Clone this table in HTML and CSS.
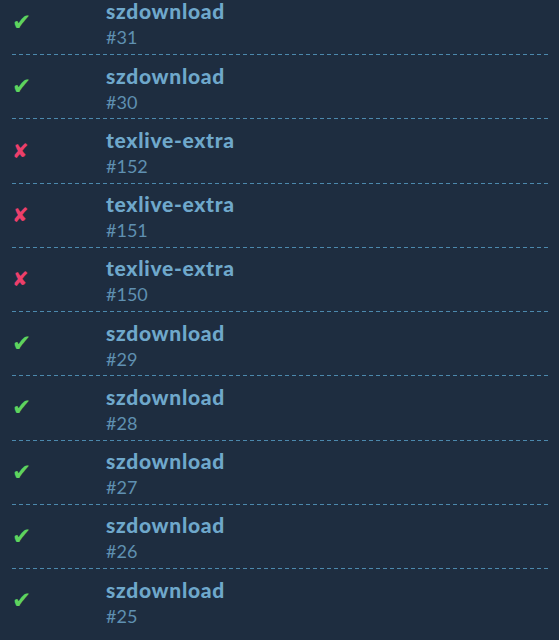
FILE: index.html
```html
<!DOCTYPE html>
<html lang="en">
<head>
  <meta charset="UTF-8" />
  <title>Builds</title>
  <link rel="stylesheet" href="styles.css">
</head>
<body>
  <ul class="build-list">
    <li class="build"><span class="status ok">✔</span><div class="info"><span class="name">szdownload</span><span class="num">#31</span></div></li>
    <li class="build"><span class="status ok">✔</span><div class="info"><span class="name">szdownload</span><span class="num">#30</span></div></li>
    <li class="build"><span class="status fail">✘</span><div class="info"><span class="name">texlive-extra</span><span class="num">#152</span></div></li>
    <li class="build"><span class="status fail">✘</span><div class="info"><span class="name">texlive-extra</span><span class="num">#151</span></div></li>
    <li class="build"><span class="status fail">✘</span><div class="info"><span class="name">texlive-extra</span><span class="num">#150</span></div></li>
    <li class="build"><span class="status ok">✔</span><div class="info"><span class="name">szdownload</span><span class="num">#29</span></div></li>
    <li class="build"><span class="status ok">✔</span><div class="info"><span class="name">szdownload</span><span class="num">#28</span></div></li>
    <li class="build"><span class="status ok">✔</span><div class="info"><span class="name">szdownload</span><span class="num">#27</span></div></li>
    <li class="build"><span class="status ok">✔</span><div class="info"><span class="name">szdownload</span><span class="num">#26</span></div></li>
    <li class="build"><span class="status ok">✔</span><div class="info"><span class="name">szdownload</span><span class="num">#25</span></div></li>
  </ul>
</body>
</html>
```

FILE: styles.css
```css
html, body {
  margin: 0;
  background: #1e2d40;
  overflow: hidden;
}

body {
  font-family: Lato, "Open Sans", sans-serif;
  height: 640px;
}

.build-list {
  list-style: none;
  margin: -9.25px 11px 0 12px;
  padding: 0;
}

.build {
  display: flex;
  align-items: center;
  height: 64.25px;
  box-sizing: border-box;
  padding-bottom: 1px;
  background: repeating-linear-gradient(90deg, #4c89ad 0 4px, transparent 4px 7px) left bottom / 100% 1px no-repeat;
}

.build:last-child {
  background: none;
}

.status {
  width: 94px;
  font-family: "DejaVu Sans", sans-serif;
  font-size: 23px;
  line-height: 1;
}

.status.ok {
  color: #5ed35e;
}

.status.fail {
  color: #ec3f6b;
  font-size: 20px;
}

.info {
  display: flex;
  flex-direction: column;
  align-self: flex-start;
  padding-top: 9.5px;
}

.name {
  color: #6fa8cb;
  font-weight: 900;
  font-size: 21px;
  letter-spacing: 0.7px;
  line-height: 21px;
}

.num {
  color: #5f90b1;
  font-size: 18px;
  line-height: 27px;
  margin-top: 3px;
}
```
